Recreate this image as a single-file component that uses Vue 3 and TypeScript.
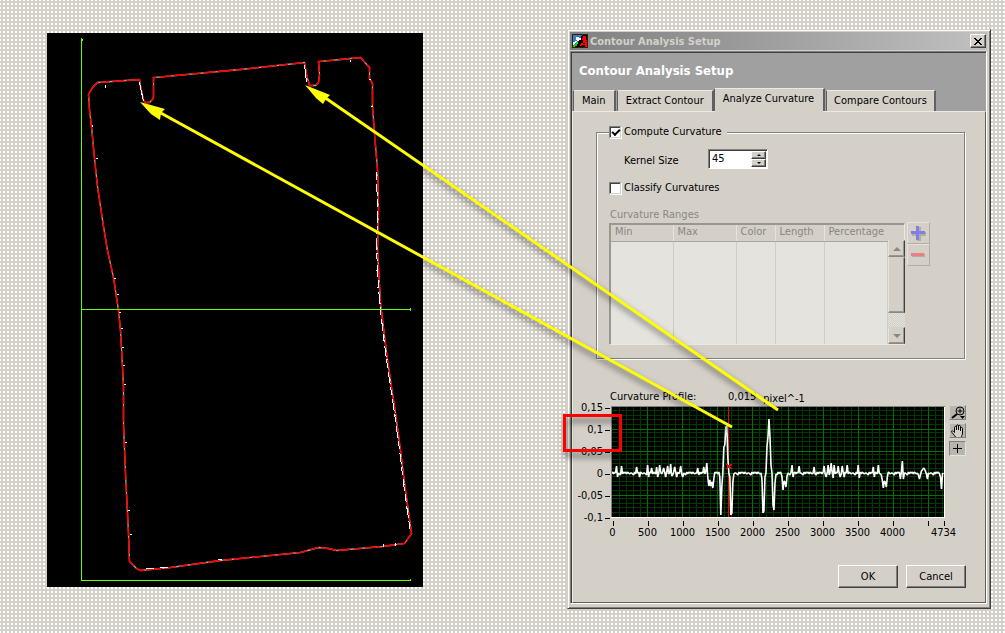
<script setup lang="ts">
import { ref } from 'vue'

const tabs = ['Main', 'Extract Contour', 'Analyze Curvature', 'Compare Contours']
const active = ref('Analyze Curvature')
const compute = ref(true)
const classify = ref(false)
const kernel = ref(45)
const columns = ['Min', 'Max', 'Color', 'Length', 'Percentage']

const yLabels = ['0,15', '0,1', '0,05', '0', '-0,05', '-0,1']
const xLabels = [
  { v: '0', x: 0 }, { v: '500', x: 35 }, { v: '1000', x: 70 }, { v: '1500', x: 105 },
  { v: '2000', x: 140 }, { v: '2500', x: 175 }, { v: '3000', x: 210 }, { v: '3500', x: 245 },
  { v: '4000', x: 280 }, { v: '', x: 315 }, { v: '4734', x: 331 },
]
const minorX = Array.from({ length: 48 }, (_, i) => i * 7).filter((x) => x % 35 !== 0)
const majorX = Array.from({ length: 9 }, (_, i) => (i + 1) * 35)
const minorY = Array.from({ length: 25 }, (_, i) => i).filter((i) => i % 5 !== 0).map((i) => Math.round(i * 4.4))
const majorY = [22, 44, 66, 88]

const peaks: Record<number, number> = {
  5: 59, 6: 70, 10: 59, 25: 60, 28: 70, 36: 58, 37: 70, 40: 61, 45: 60, 46: 70, 48: 58, 52: 61, 54: 70,
  56: 59, 59: 57, 60: 69, 63: 60, 65: 70, 69: 59, 71: 70, 86: 61, 92: 60, 95: 56, 96: 70, 97: 79, 98: 73, 99: 79,
  100: 75, 101: 81, 102: 72, 108: 70, 109: 108, 110: 80, 111: 66, 112: 40, 113: 38, 114: 20, 115: 19, 116: 51,
  117: 66, 118: 70, 119: 108, 120: 106, 121: 75, 150: 72, 151: 106, 152: 104, 153: 70, 154: 66, 155: 40,
  156: 30, 157: 12, 158: 30, 159: 58, 160: 66, 161: 98, 162: 103, 163: 76, 170: 70, 171: 83, 172: 74, 173: 75,
  174: 80, 175: 69, 180: 58, 181: 70, 187: 59, 202: 60, 212: 59, 214: 70, 216: 58, 219: 56, 221: 71, 222: 58,
  226: 59, 228: 70, 230: 59, 232: 70, 235: 58, 246: 58, 247: 71, 261: 60, 262: 70, 266: 58, 270: 73, 271: 81,
  272: 74, 273: 75, 274: 80, 275: 70, 288: 72, 290: 54, 291: 72, 306: 68, 307: 72, 309: 64, 310: 63, 311: 61,
  312: 62, 313: 64, 315: 72, 328: 70, 329: 82, 330: 67,
}
const noise = [0, 1, -1, 1, 0, -1, 2, 0, -1, 0, 1, -1, 1]
const trace = Array.from({ length: 332 }, (_, x) => `${x},${peaks[x] ?? 66 + noise[(x * 5) % 13]}`).join(' ')

const outline =
  'M88 94L92 87L97 82L139 79L140 86L143 100L145 102H149L152 99L153 96V77L240 69L304 62L306 74L309 85H315L318 82L319 74L318 61L340 59L360 57L369 67V78L372 83V106L374 133L377 169L378 210L377 250L380 303L387 360L395 413L400 450L404 483L411 533L404 543L382 546L336 550L328 548L318 547L300 552L220 560L170 567L140 570L136 568L129 561L128 533L125 473L123 423V387L122 366L120 330L118 310L113 277L107 250L103 226L97 186L94 158L91 126L89 109Z'
const flecks =
  'M105 84v3M92 124v2M96 158h2M350 59v2M369 79h2M371 106h2M114 278h2M117 294h2M119 312h2M121 328h2M122 347h2M123 365h2M124 384h2M125 442h2M128 510h2M130 534h2M376 253h2M376 270h2M377 287h2M379 303h2M381 323h2M383 340h2M386 359h2M394 415h2M403 484h2M406 508h2M383 543v3M395 542v3M146 568h8M160 567h8M218 559h4'
</script>

<template>
  <main class="desktop">
    <section class="scene" aria-label="Contour image">
      <svg viewBox="47 33 376 554" preserveAspectRatio="none" shape-rendering="crispEdges" fill="none">
        <path d="M47 33h376v554H47z" fill="#000" />
        <path :d="outline" class="trace-under" shape-rendering="auto" transform="translate(.5 .5)" />
        <path :d="outline" class="trace-over" shape-rendering="auto" transform="translate(.5 .5)" />
        <path d="M376.500 172L377.500 210L376.500 250L379.500 303L386.500 360L394.500 413L399.500 450L403.500 483L410.500 533" stroke="#fff" stroke-dasharray="8 4 12 3" />
        <path d="M139.500 82L140.500 88L143.500 101M304.500 65L306.500 82" stroke="#fff" />
        <path :d="flecks" stroke="#fff" transform="translate(0 .5)" />
        <path d="M81.500 38V580.500M81 309.500H411M81 580.500H411M82.500 39v2M410.500 308v3M410.500 579v2" stroke="#6f0" />
      </svg>
    </section>

    <section class="window" aria-label="Contour Analysis Setup">
      <div class="titlebar">
        <svg class="app-icon" viewBox="0 0 16 14" shape-rendering="crispEdges">
          <path fill="#3a1c00" d="M0 0h16v14H0z" />
          <path fill="#3c78c8" d="M1 1h9L3 13H1z" />
          <path fill="#000" d="M10 1h5v12H4z" />
          <path fill="#fff" d="M4 3h3v1h2v2H7v1H5V6H4zM1 8h2V7h2v2H3v2H1z" />
          <path fill="#0d1" d="M4 8h2v2H5v2H3v1H1v-1h1v-2h2z" />
          <path fill="#f00" d="M11 2h3v4h1v7h-2v-2h-3v1H8v-2h1V9h2V6h-1V4h1z" />
          <path fill="#000" d="M11 9h2v1h-2z" />
        </svg>
        <span class="caption">Contour Analysis Setup</span>
        <button class="close" type="button" aria-label="Close">
          <svg viewBox="0 0 8 7" shape-rendering="crispEdges"><path d="M0 0h2v1h1v1h2V1h1V0h2v1H7v1H6v1H5v1h1v1h1v1h1v1H6V6H5V5H3v1H2v1H0V6h1V5h1V4h1V3H2V2H1V1H0z" /></svg>
        </button>
      </div>

      <div class="client">
        <header>
          <h1>Contour Analysis Setup</h1>
          <nav role="tablist">
            <button v-for="t in tabs" :key="t" type="button" role="tab" :aria-selected="active === t"
              :class="{ active: active === t }" @click="active = t">{{ t }}</button>
          </nav>
        </header>

        <div class="panel">
          <div class="group">
            <label class="check legend"><input v-model="compute" type="checkbox" />Compute Curvature</label>
            <div class="kernel">
              <label for="kernel">Kernel Size</label>
              <div class="spinner">
                <input id="kernel" v-model.number="kernel" type="text" />
                <span>
                  <button type="button" aria-label="Increase" @click="kernel++"><i class="up"></i></button>
                  <button type="button" aria-label="Decrease" @click="kernel--"><i class="down"></i></button>
                </span>
              </div>
            </div>
            <label class="check"><input v-model="classify" type="checkbox" />Classify Curvatures</label>
            <div id="ranges" class="ranges-title">Curvature Ranges</div>
            <div class="ranges">
              <div class="table-box">
                <table aria-labelledby="ranges">
                  <colgroup><col class="c1" /><col class="c2" /><col class="c3" /><col class="c4" /><col /><col class="c6" /></colgroup>
                  <thead><tr><th v-for="c in columns" :key="c">{{ c }}</th><th></th></tr></thead>
                  <tbody><tr><td v-for="n in 6" :key="n"></td></tr></tbody>
                </table>
                <div class="scroll">
                  <button type="button" disabled aria-label="Scroll up"><i class="up"></i></button>
                  <div class="thumb"></div>
                  <div class="track"></div>
                  <button type="button" disabled aria-label="Scroll down"><i class="down"></i></button>
                </div>
              </div>
              <div class="row-buttons">
                <button type="button" disabled aria-label="Add range">
                  <svg viewBox="0 0 15 15" shape-rendering="crispEdges"><path fill="#b0ada6" d="M6 1h4v5h5v4h-5v5H6v-5H1V6h5z" /><path fill="#8080e4" d="M5 0h3v5h6v3H8v6H5V8H0V5h5z" /></svg>
                </button>
                <button type="button" disabled aria-label="Remove range">
                  <svg viewBox="0 0 15 15" shape-rendering="crispEdges"><path fill="#b0ada6" d="M1 6h13v3H1z" /><path fill="#e88080" d="M0 5h13v3H0z" /></svg>
                </button>
              </div>
            </div>
          </div>

          <div class="profile-head">
            <span class="name">Curvature Profile:</span><span>0,015</span><span class="unit">pixel^-1</span>
          </div>
          <div class="profile">
            <div class="y-axis"><span v-for="l in yLabels" :key="l">{{ l }}</span></div>
            <div class="plot-col">
              <svg class="plot" viewBox="0 0 333 112" preserveAspectRatio="none" shape-rendering="crispEdges" fill="none">
                <path fill="#000" d="M0 0h333v112H0z" />
                <g stroke="#003a00">
                  <path v-for="x in minorX" :key="'a' + x" :d="`M${x + 1}.5 0V111`" />
                  <path v-for="y in minorY" :key="'b' + y" :d="`M0 ${y}.5H332`" />
                </g>
                <g stroke="#007400">
                  <path v-for="x in majorX" :key="'c' + x" :d="`M${x + 1}.5 0V111`" />
                  <path v-for="y in majorY" :key="'d' + y" :d="`M0 ${y + 1}.5H332`" />
                </g>
                <path stroke="#f00" d="M117.500 0V111" />
                <polyline :points="trace" class="signal" shape-rendering="auto" transform="translate(.5 1)" />
                <path stroke="#f00" d="M115 58l5 5M120 58l-5 5" />
                <path stroke="#808080" d="M0 .5H333M.5 0V111" />
                <path stroke="#fff" d="M332.500 1V112M0 111.500H333" />
              </svg>
              <svg class="x-axis" viewBox="0 0 333 22" shape-rendering="crispEdges" role="img" aria-label="Position axis">
                <path v-for="l in xLabels" :key="'t' + l.x" stroke="#000" :d="`M${l.x + 1}.5 3v5`" />
                <text v-for="l in xLabels" :key="l.x" :x="l.x + 1" y="18" text-anchor="middle">{{ l.v }}</text>
              </svg>
            </div>
            <div class="tools">
              <button type="button" aria-label="Zoom">
                <svg viewBox="0 0 15 13" fill="none" stroke="#000"><circle cx="10" cy="5" r="4" /><path d="M7.500 5h5M10 2.500v5" /><path d="M7 8L2 12" stroke-width="2" /><path fill="#000" stroke="none" d="M10 10h5l-2.500 3z" /></svg>
              </button>
              <button type="button" aria-label="Pan">
                <svg viewBox="0 0 15 13" fill="none" stroke="#000"><path fill="#d4d0c8" d="M5.500 13C4.500 11 1.500 8.500 1.500 7.500c0-1 1.500-1 3 1V3.500c0-1.500 2-1.500 2 0V6 2c0-1.500 2-1.500 2 0v4-3.500c0-1.500 2-1.500 2 0V7 4.500c0-1.500 2-1.500 2 0V9c0 2-1 3-1 4" /></svg>
              </button>
              <button type="button" class="pressed" aria-label="Cursor">
                <svg viewBox="0 0 15 13" shape-rendering="crispEdges" stroke="#000"><path d="M3 6.500h9M7.500 2v9" /></svg>
              </button>
            </div>
          </div>

          <footer>
            <button type="button">OK</button>
            <button type="button">Cancel</button>
          </footer>
        </div>
      </div>
    </section>

    <svg class="notes" viewBox="0 0 1005 633" preserveAspectRatio="none" fill="none" aria-hidden="true">
      <path stroke="#f00" stroke-width="3" d="M564.500 415.500h56v35h-56z" />
      <g stroke="#ff0" stroke-width="3">
        <path d="M159 112L732 427" />
        <path d="M324 97L778 410" />
      </g>
      <path fill="#ff0" d="M140 102L165 109L161 113L160 120L151 114ZM305 85L330 95L326 99L323 104L316 98Z" />
    </svg>
  </main>
</template>

<style>
body { margin: 0; }
</style>

<style scoped>
* { box-sizing: border-box; }
.desktop {
  position: relative;
  display: grid;
  grid-template-columns: minmax(0, 376fr) minmax(0, 424fr);
  column-gap: 144px;
  align-items: start;
  min-height: 100vh;
  padding: 29px 14px 24px 47px;
  background:
    linear-gradient(90deg, #d4d0c8 2px, transparent 2px) 1px 0 / 4px 4px,
    linear-gradient(#d4d0c8 2px, transparent 2px) 0 1px / 4px 4px,
    #fff;
  color: #000;
  font: 11px/14px "DejaVu Sans Condensed", "DejaVu Sans", sans-serif;
}
.scene { margin-top: 4px; }
.scene svg { display: block; width: 100%; height: 554px; }
.trace-under { stroke: #aaa; stroke-width: 1.3; }
.trace-over { stroke: #f00; stroke-width: 1.6; stroke-dasharray: 16 2 9 3 12 2; }
.signal { stroke: #fff; stroke-width: 1.6; stroke-linejoin: bevel; }
.notes {
  position: absolute;
  inset: 0;
  width: 100%;
  height: 633px;
  pointer-events: none;
  filter: drop-shadow(2px 5px 3px rgba(0, 0, 0, 0.6));
}
button, input { font: inherit; color: inherit; margin: 0; padding: 0; border-radius: 0; }
button {
  background: #d4d0c8;
  border: 1px solid;
  border-color: #fff #404040 #404040 #fff;
  box-shadow: inset -1px -1px #808080;
}
button svg { display: block; }
i { display: block; border: solid transparent; border-width: 0 3px; margin: auto; width: 0; }
i.up { border-bottom: 3px solid #000; }
i.down { border-top: 3px solid #000; }

.window {
  background: #d4d0c8;
  border: 1px solid;
  border-color: #d4d0c8 #404040 #404040 #d4d0c8;
  box-shadow: inset 1px 1px #fff, inset -1px -1px #808080;
  padding: 2px 3px 4px 2px;
}
.titlebar {
  display: flex;
  align-items: center;
  height: 18px;
  padding: 0 1px 0 2px;
  background: linear-gradient(90deg, #808080, #c0c0c0);
}
.app-icon { width: 16px; height: 14px; }
.caption { flex: 1; padding: 1px 0 0 2px; color: #d4d0c8; font-weight: bold; }
.close { display: grid; place-items: center; width: 16px; height: 14px; }
.close svg { width: 8px; height: 7px; }

.client {
  margin-top: 1px;
  border: 1px solid;
  border-color: #808080 #fff #fff #808080;
  box-shadow: inset 1px 1px #404040;
  padding: 1px 0 0 1px;
}
header { padding-top: 9px; background: #a0a0a0; }
h1 { margin: 0 7px; font-size: 13px; line-height: 18px; font-weight: bold; color: #fff; }
nav { display: flex; align-items: flex-end; height: 31px; padding-left: 1px; }
nav button {
  height: 21px;
  padding: 0 8px;
  margin-right: 1px;
  border-width: 1px 2px 0 1px;
  border-color: #ece9e4 #606060;
  box-shadow: none;
  white-space: nowrap;
}
nav button.active { position: relative; height: 23px; padding: 0 9px 2px 8px; margin-left: -1px; }
nav button:last-child { padding: 0 7px; }
nav button.active::after { content: ''; position: absolute; inset: auto 0 -1px; height: 1px; background: #d4d0c8; }
.panel {
  border: 1px solid;
  border-color: #ece9e4 #606060 #606060 #ece9e4;
  padding: 20px 19px 14px 23px;
}
.group {
  margin-right: 1px;
  border: 1px solid #808080;
  box-shadow: 1px 1px #fff, inset 1px 1px #fff;
  height: 227px;
  padding-left: 12px;
}
.check { display: flex; align-items: center; width: max-content; gap: 3px; }
.legend { margin-top: -8px; background: #d4d0c8; padding-right: 5px; }
.check input {
  appearance: none;
  width: 12px;
  height: 12px;
  background: #fff;
  border: 1px solid;
  border-color: #808080 #d4d0c8 #d4d0c8 #808080;
  box-shadow: inset 1px 1px #404040, 1px 1px #fff;
}
.check input:checked::after {
  content: '';
  display: block;
  width: 6px;
  height: 3px;
  margin: 2px 0 0 2px;
  border: solid #000;
  border-width: 0 0 2px 2px;
  rotate: -45deg;
}
.kernel { display: flex; align-items: center; margin: 10px 0 12px 15px; }
.kernel label { width: 84px; padding-top: 3px; }
.spinner {
  display: flex;
  width: 60px;
  height: 20px;
  background: #fff;
  border: 1px solid;
  border-color: #808080 #fff #fff #808080;
  box-shadow: inset 1px 1px #404040;
  padding: 1px;
}
.spinner input { flex: 1; min-width: 0; border: 0; background: none; padding-left: 2px; outline: 0; }
.spinner span { display: flex; flex-direction: column; width: 15px; }
.spinner button { flex: 1; min-height: 0; line-height: 0; }
.spinner i { border-width: 0 2px; }
.spinner i.up { border-bottom-width: 2px; }
.spinner i.down { border-top-width: 2px; }
.ranges-title { margin-top: 13px; padding-left: 1px; color: #8a8781; }
.ranges { display: flex; margin-top: 1px; }
.table-box {
  position: relative;
  flex: 0 0 296px;
  border: 1px solid;
  border-color: #9a9791 #ebe8e2 #ebe8e2 #9a9791;
  box-shadow: inset 1px 1px #9a9791;
  padding: 1px 0 0 1px;
}
table { width: 100%; border-collapse: collapse; table-layout: fixed; color: #8a8781; }
.c1 { width: 62px; }
.c2 { width: 63px; }
.c3 { width: 39px; }
.c4 { width: 49px; }
.c6 { width: 16px; }
th {
  height: 16px;
  padding: 0 0 1px 4px;
  text-align: left;
  font-weight: normal;
  border-bottom: 1px solid #aaa7a1;
  border-left: 1px solid #e6e3dd;
  line-height: 14px;
}
th:first-child { border-left: 0; }
th:last-child { border-left: 0; }
td { height: 103px; background: #e4e3de; border-right: 1px solid #cfccc5; padding: 0; }
.scroll {
  position: absolute;
  right: -1px;
  bottom: 0;
  display: flex;
  flex-direction: column;
  width: 17px;
  height: 104px;
  background: #d4d0c8;
}
.scroll button, .thumb {
  height: 17px;
  border: 1px solid;
  border-color: #d4d0c8 #404040 #8a8781 #e4e3de;
  box-shadow: inset -1px -1px #9a9791;
}
.scroll .thumb { flex: 1; }
.scroll .track { height: 14px; background: repeating-conic-gradient(#e4e3de 0 25%, #d0cdc6 0 50%) 0 0 / 2px 2px; }
.scroll i { border-width: 0 4px; }
.scroll i.up { border-bottom: 4px solid #8a8781; }
.scroll i.down { border-top: 4px solid #8a8781; }
.row-buttons { margin: -1px 0 0 2px; }
.row-buttons button {
  display: grid;
  place-items: center;
  width: 23px;
  height: 22px;
  border-color: #e4e3de #b0ada6 #b0ada6 #e4e3de;
  box-shadow: none;
}
.row-buttons svg { width: 15px; height: 15px; }

.profile-head { display: flex; margin: 31px 0 0 14px; }
.profile-head .name { width: 118px; }
.profile-head .unit { margin-left: 7px; padding-top: 2px; line-height: 14px; }
.profile { display: flex; margin-left: -23px; }
.y-axis { width: 38px; margin-top: -6px; text-align: right; flex: none; }
.y-axis span {
  display: flex;
  justify-content: flex-end;
  align-items: center;
  gap: 2px;
  height: 22px;
  line-height: 16px;
  padding: 0 1px 6px 0;
}
.y-axis span::after { content: ''; width: 5px; height: 1px; background: #000; }
.plot-col { flex: 1; min-width: 0; }
.plot { display: block; width: 100%; height: 112px; }
.x-axis { display: block; width: 100%; height: 22px; overflow: visible; font-size: 11px; }
.tools { width: 17px; margin: -1px 0 0 4px; flex: none; }
.tools button {
  display: block;
  width: 17px;
  height: 15px;
  margin-bottom: 3px;
  background: #b8b5ae;
  border-color: #d4d0c8 #808080 #808080 #d4d0c8;
  box-shadow: none;
}
.tools svg { width: 15px; height: 13px; }
.tools .pressed { border-color: #808080 #e4e3de #e4e3de #808080; }
footer { display: flex; justify-content: flex-end; gap: 8px; margin-top: 25px; }
footer button { width: 60px; height: 23px; }
</style>
